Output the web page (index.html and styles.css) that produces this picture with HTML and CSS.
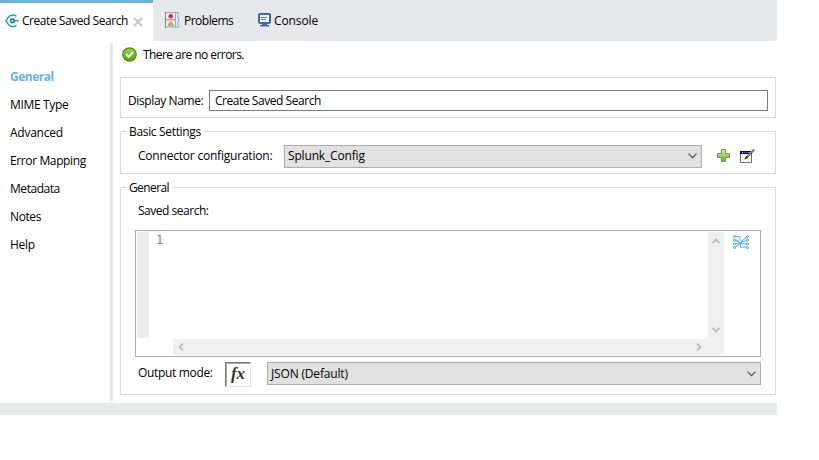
FILE: index.html
```html
<!DOCTYPE html>
<html lang="en">
<head>
<meta charset="utf-8">
<title>Create Saved Search</title>
<link rel="stylesheet" href="styles.css">
</head>
<body>
<div class="window">
  <nav class="tabs">
    <div class="tab active">
      <svg class="logo" width="14" height="14" viewBox="0 0 14 14" fill="none" stroke="#249fc9" stroke-width="1.5"><path d="M11.5 2.3C8.5 0 4.3 1 2.8 4L1 6.8l1.8 2.8c1.5 3 5.7 4 8.7 1.7M9.3 6.8H13.8"/><circle cx="7.4" cy="6.8" r="1.8" stroke="#176d9f"/></svg>
      <span class="t-create">Create Saved Search</span>
      <svg class="close" width="10" height="10" viewBox="0 0 10 10" stroke="#c9c9c9" stroke-width="2"><path d="M1 1l8 8M9 1L1 9"/></svg>
    </div>
    <div class="tab problems">
      <svg width="15" height="16" viewBox="0 0 15 16"><path d="M.5.5h13l-1 3 1.5 4-1.5 4 1.5 3.5H.5z" fill="#e4eefb" stroke="#8ba4c6"/><path d="M.5 0v16M.5 7.8h10" stroke="#968568"/><path d="M10.5 1v14" stroke="#8ba8ce"/><circle cx="5.8" cy="4.3" r="2.3" fill="#e5242e"/><path d="M3.4 13.5v-1.7l2.4-2.2 2.4 2.2v1.7z" fill="#f7b52c" stroke="#dc8a21" stroke-width=".8"/></svg>
      <span class="t-problems">Problems</span>
    </div>
    <div class="tab console">
      <svg width="13" height="14" viewBox="0 0 13 14"><rect x="1" y="1" width="11" height="9" rx="1" fill="#f5faff" stroke="#3b6bb3" stroke-width="2"/><path d="M3 4.5h6M3 6.5h5" stroke="#6878a8"/><path d="M4 11h5v1h2v1.5H2V12h2z" fill="#42669f"/></svg>
      <span class="t-console">Console</span>
    </div>
  </nav>
  <div class="body">
    <aside class="side">
      <div class="item current"><span class="t-general">General</span></div>
      <div class="item"><span class="t-mime">MIME Type</span></div>
      <div class="item"><span class="t-advanced">Advanced</span></div>
      <div class="item"><span class="t-error">Error Mapping</span></div>
      <div class="item"><span class="t-metadata">Metadata</span></div>
      <div class="item"><span class="t-notes">Notes</span></div>
      <div class="item"><span class="t-help">Help</span></div>
    </aside>
    <main class="main">
      <div class="status">
        <svg width="15" height="15" viewBox="0 0 15 15"><defs><linearGradient id="ok" x2="0" y2="1"><stop stop-color="#9bd34b"/><stop offset="1" stop-color="#54a900"/></linearGradient></defs><circle cx="7.5" cy="7.5" r="6.7" fill="url(#ok)" stroke="#4d8d08" stroke-width="1.2"/><path d="M4 7l2.7 2.7L11 5" fill="none" stroke="#fff" stroke-width="2"/></svg>
        <span class="t-status">There are no errors.</span>
      </div>
      <section class="group display">
        <label class="t-display">Display Name:</label>
        <div class="field"><span class="t-create">Create Saved Search</span></div>
      </section>
      <section class="group basic">
        <h2 class="legend"><span class="t-basic">Basic Settings</span></h2>
        <div class="row">
          <label class="t-connector">Connector configuration:</label>
          <div class="select config"><span class="t-splunk">Splunk_Config</span><svg width="9" height="6" viewBox="0 0 9 6" fill="none" stroke="#505050" stroke-width="1.2"><path d="M.5.7l4 4 4-4"/></svg></div>
          <svg class="add" width="13" height="13" viewBox="0 0 13 13"><defs><linearGradient id="plus" x2="0" y2="1"><stop stop-color="#eff281"/><stop offset="1" stop-color="#5cae32"/></linearGradient></defs><path d="M4.5.5h4v4h4v4h-4v4h-4v-4h-4v-4h4z" fill="url(#plus)" stroke="#5f9b6c"/></svg>
          <svg class="edit" width="15" height="14" viewBox="0 0 15 14"><path d="M.5 2.5h11v11H.5z" fill="#fffffa" stroke="#716f64"/><path d="M0 2h12v3H0z" fill="#0000a0"/><path d="M2 3.5h1" stroke="#fff"/><path d="M4 3.5h4" stroke="#2850c8"/><path d="M8 3.5h3" stroke="#25bce8"/><path d="M6 9l8-8.5" stroke="#493021" stroke-width="1.9"/><path d="M7.5 7l6.5-6.5" stroke="#cb9048" stroke-width="1.1"/><path d="M5 10l1.5-1.7" stroke="#111" stroke-width="1.3"/></svg>
        </div>
      </section>
      <section class="group general">
        <h2 class="legend"><span class="t-legend">General</span></h2>
        <div class="saved"><label class="t-saved">Saved search:</label></div>
        <div class="editor">
          <div class="gutter"></div>
          <div class="line">1</div>
          <div class="vscroll">
            <svg width="8" height="6" viewBox="0 0 8 6" fill="none" stroke="#bdbdbd" stroke-width="1.9"><path d="M.6 5L4 1.6 7.4 5"/></svg>
            <svg width="8" height="6" viewBox="0 0 8 6" fill="none" stroke="#bdbdbd" stroke-width="1.9"><path d="M.6 1L4 4.4 7.4 1"/></svg>
          </div>
          <div class="hscroll">
            <svg width="6" height="8" viewBox="0 0 6 8" fill="none" stroke="#bdbdbd" stroke-width="1.9"><path d="M5 .6L1.6 4 5 7.4"/></svg>
            <svg width="6" height="8" viewBox="0 0 6 8" fill="none" stroke="#bdbdbd" stroke-width="1.9"><path d="M1 .6L4.4 4 1 7.4"/></svg>
          </div>
          <svg class="map" width="16" height="14" viewBox="0 0 16 14" fill="none" stroke="#5fb0f3"><path d="M2 1.5h5v3l1.5 2M2 5.2h3l2.5 3v4H14M2 8.8h4L14 1.5M2 12.5L14 1.5M2 12.5l7-5.5 5-1.8M2 5.2l7 3.6h5"/><g fill="#fff" stroke="#4397e6"><circle cx="1.5" cy="1.5" r="1"/><circle cx="1.5" cy="5.2" r="1"/><circle cx="1.5" cy="8.8" r="1"/><circle cx="1.5" cy="12.5" r="1"/><circle cx="14.5" cy="1.5" r="1"/><circle cx="14.5" cy="5.2" r="1"/><circle cx="14.5" cy="8.8" r="1"/><circle cx="14.5" cy="12.5" r="1"/></g></svg>
        </div>
        <div class="output">
          <label class="t-output">Output mode:</label>
          <div class="fx">fx</div>
          <div class="select mode"><span class="t-json">JSON (Default)</span><svg width="9" height="6" viewBox="0 0 9 6" fill="none" stroke="#505050" stroke-width="1.2"><path d="M.5.7l4 4 4-4"/></svg></div>
        </div>
      </section>
    </main>
  </div>
  <div class="foot"></div>
</div>
</body>
</html>
```
FILE: styles.css
```css
* { box-sizing: border-box; }
body { margin: 0; background: #fff; color: #000; font: 12px/16px "Open Sans", "Noto Sans", sans-serif; letter-spacing: -0.25px; }
svg { display: block; flex: none; }
span, label { white-space: nowrap; }
.window { width: 777px; }
.tabs { display: flex; height: 41px; background: #e7e8ea; }
.tab { display: flex; align-items: center; }
.active { width: 153px; background: #fff; border-top: 3px solid #66b5db; padding-left: 5px; }
.active span { width: 106px; margin: -2px 0 0 3px; }
.active .logo { margin-top: -3px; }
.close { margin: 0 0 0 5px; }
.problems { width: 105px; padding-left: 12px; gap: 4px; }
.problems svg { margin-top: -1px; }
.console { gap: 3px; }
.console svg { margin-top: -1px; }
.t-create { letter-spacing: -0.45px; }
.t-problems { letter-spacing: -0.5px; }
.t-console { letter-spacing: -0.12px; }
.t-status { letter-spacing: -0.56px; }
.t-display { letter-spacing: -0.38px; }
.t-basic { letter-spacing: -0.33px; }
.t-connector { letter-spacing: -0.21px; }
.t-splunk, .t-json { letter-spacing: -0.17px; }
.t-mime { letter-spacing: -0.35px; }
.t-error { letter-spacing: -0.38px; }
.t-metadata { letter-spacing: -0.45px; }
.t-legend { letter-spacing: -0.6px; }
.t-saved { letter-spacing: -0.48px; }
.t-output { letter-spacing: -0.33px; }
.t-notes { letter-spacing: -0.4px; }
.body { display: flex; height: 360px; margin-top: 2px; }
.side { width: 113px; height: 358px; border-right: 3px solid #e7e8ea; padding: 20px 0 0 10px; }
.item { height: 28px; line-height: 28px; }
.current { color: #66b5db; font-weight: 700; letter-spacing: -0.5px; }
.main { width: 663px; padding-left: 7px; }
.status { display: flex; align-items: center; height: 34px; padding: 0 0 11px 2px; gap: 6px; }
.status span { margin-top: 1px; }
.group { border: 1px solid #dcdcdc; width: 656px; }
.display { display: flex; height: 41px; padding: 12px 7px 7px; }
.display label { width: 81px; line-height: 22px; }
.field { width: 559px; height: 21px; border: 1px solid #7a7a7a; padding-left: 5px; line-height: 20px; }
.basic { height: 43px; margin-top: 13px; }
.legend { width: max-content; height: 16px; margin: -8px 0 0 6px; padding: 0 3px 0 2px; background: #fff; font: inherit; }
.row { display: flex; align-items: center; height: 24px; margin-top: 4px; padding-left: 17px; }
.row label { width: 146px; }
.select { display: flex; align-items: center; justify-content: space-between; height: 23px; border: 1px solid #adadad; background: #e1e1e1; padding: 0 4px 0 3px; }
.config { width: 418px; }
.add { margin: -1px 0 0 15px; }
.edit { margin: -1px 0 0 10px; }
.general { height: 208px; margin-top: 13px; }
.saved { height: 34px; padding: 7px 0 0 17px; }
.editor { display: grid; grid-template-columns: 12px 24px 535px 16px 1fr; grid-template-rows: 107px 16px; width: 626px; height: 127px; margin-left: 14px; border: 1px solid #abadb3; padding: 1px; }
.gutter { width: 12px; height: 106px; background: #ececec; }
.line { padding: 1px 0 0 7px; color: #858585; font: 12px/15px "DejaVu Sans Mono", monospace; letter-spacing: 0; }
.vscroll { grid-column: 4; display: flex; flex-direction: column; justify-content: space-between; align-items: center; padding: 6px 1px 6px 0; background: #f0f0f0; }
.hscroll { grid-column: 3 / 5; grid-row: 2; display: flex; justify-content: space-between; align-items: center; padding: 0 22px 1px 5px; background: #f0f0f0; }
.map { margin: 3px 0 0 9px; }
.output { display: flex; margin-top: 5px; padding-left: 17px; }
.output label { width: 87px; line-height: 22px; }
.fx { width: 26px; height: 25px; border: 1px solid #e3e3e3; border-top: 1px solid #777; border-left: 1px solid #777; box-shadow: inset 1px 1px #aaa; text-align: center; font: italic bold 17px/21px "Liberation Serif", serif; letter-spacing: 0; color: #333; }
.mode { width: 494px; margin-left: 16px; }
.foot { height: 12px; background: #e7e8ea; }
```
